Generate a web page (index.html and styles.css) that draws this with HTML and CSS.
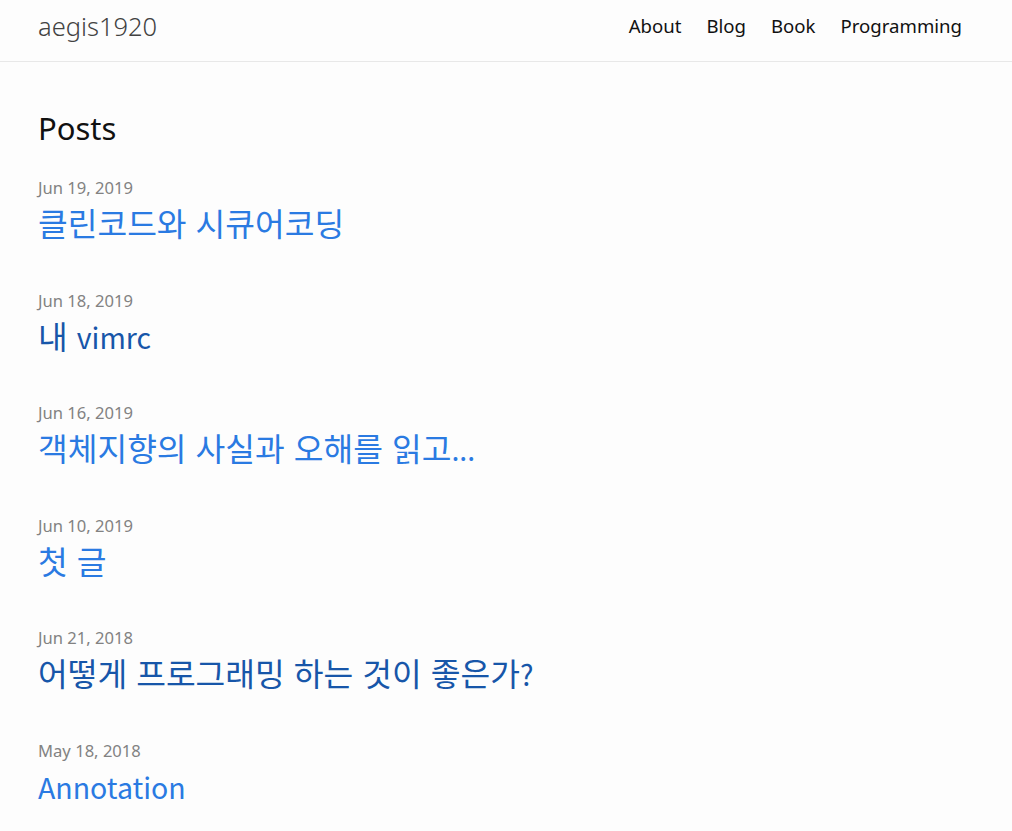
FILE: index.html
```html
<!DOCTYPE html>
<html lang="ko">
<head>
<meta charset="utf-8">
<title>aegis1920</title>
<link rel="stylesheet" href="styles.css">
</head>
<body>
<header class="site-header">
  <div class="wrapper header-inner">
    <a class="site-title" href="#">aegis1920</a>
    <nav class="site-nav">
      <a class="page-link" href="#">About</a>
      <a class="page-link" href="#">Blog</a>
      <a class="page-link" href="#">Book</a>
      <a class="page-link" href="#">Programming</a>
    </nav>
  </div>
</header>
<main class="page-content">
  <div class="wrapper">
    <h2 class="post-list-heading">Posts</h2>
    <ul class="post-list">
      <li class="post-item">
        <span class="post-meta">Jun 19, 2019</span>
        <h3 class="post-title"><a class="post-link" href="#">클린코드와 시큐어코딩</a></h3>
      </li>
      <li class="post-item">
        <span class="post-meta">Jun 18, 2019</span>
        <h3 class="post-title"><a class="post-link visited" href="#">내 <span lang="en">vimrc</span></a></h3>
      </li>
      <li class="post-item">
        <span class="post-meta">Jun 16, 2019</span>
        <h3 class="post-title"><a class="post-link" href="#">객체지향의 사실과 오해를 읽고<span lang="en">...</span></a></h3>
      </li>
      <li class="post-item">
        <span class="post-meta">Jun 10, 2019</span>
        <h3 class="post-title"><a class="post-link" href="#">첫 글</a></h3>
      </li>
      <li class="post-item">
        <span class="post-meta">Jun 21, 2018</span>
        <h3 class="post-title"><a class="post-link visited" href="#">어떻게 프로그래밍 하는 것이 좋은가<span lang="en">?</span></a></h3>
      </li>
      <li class="post-item">
        <span class="post-meta">May 18, 2018</span>
        <h3 class="post-title"><a class="post-link" href="#"><span lang="en">Annotation</span></a></h3>
      </li>
    </ul>
  </div>
</main>
</body>
</html>
```

FILE: styles.css
```css
html, body {
  margin: 0;
  padding: 0;
}
body {
  background: #fdfdfd;
  color: #111111;
  font-family: "Noto Sans", "Noto Sans CJK KR", sans-serif;
  font-size: 16px;
  line-height: 1.5;
}
a {
  text-decoration: none;
}
.wrapper {
  padding: 0 50px 0 38px;
}
.site-header {
  border-bottom: 1px solid #e8e8e8;
}
.header-inner {
  display: flex;
  justify-content: space-between;
  align-items: center;
  height: 61px;
  box-sizing: border-box;
  padding-bottom: 10px;
}
.site-title {
  font-size: 25.5px;
  font-weight: 300;
  color: #424242;
  line-height: 40px;
  margin-top: 1px;
}
.site-nav {
  display: flex;
  gap: 25px;
}
.page-link {
  color: #111111;
  font-size: 18.6px;
  line-height: 40px;
}
.post-list-heading {
  font-size: 31px;
  font-weight: 400;
  margin: 0 0 28px;
  padding-top: 46px;
  line-height: 40px;
}
.post-list {
  list-style: none;
  margin: 0;
  padding: 0;
}
.post-item {
  margin-bottom: 46.5px;
}
.post-meta {
  display: block;
  font-size: 16.6px;
  color: #828282;
  line-height: 24px;
}
.post-title {
  margin: 2px 0 0;
  font-weight: 400;
}
.post-link {
  display: block;
  font-family: "Noto Sans CJK KR", "Noto Sans", sans-serif;
  font-size: 32.3px;
  line-height: 40px;
  height: 40px;
  color: #2a7ae2;
}
.post-link :lang(en) {
  font-size: 28.5px;
  line-height: 0;
}
.post-link.visited {
  color: #1756a9;
}
```
